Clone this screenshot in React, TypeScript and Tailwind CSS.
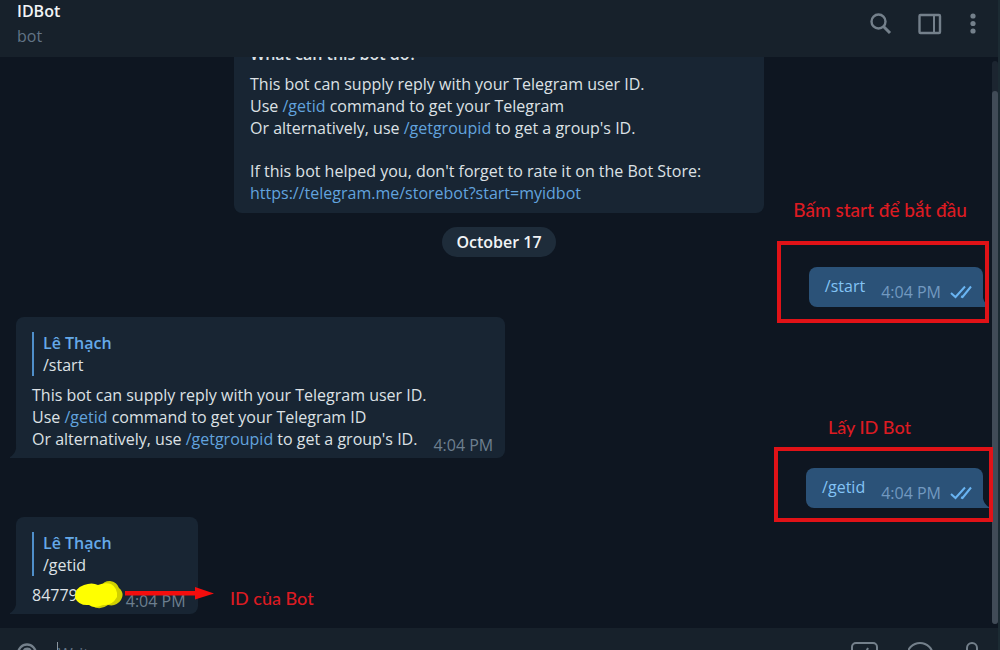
import type { ReactNode } from "react";

function Ticks() {
  return (
    <svg viewBox="0 0 24 16" className="h-4 w-6 shrink-0 text-[#69b4f2]" fill="none" stroke="currentColor" strokeWidth="2" role="img" aria-label="Read">
      <path d="M2 9 L6.5 13 L16 2.5 M12 12.5 L13.5 13 L22 2.5" />
    </svg>
  );
}

function Command({ children }: { children: ReactNode }) {
  return <a href="#command" className="text-[#62a3de]">{children}</a>;
}

function Incoming({ command, children }: { command: string; children: ReactNode }) {
  return (
    <article className="relative ml-4 shrink-0 self-start rounded-lg rounded-bl-none bg-[#182533] pt-[15px] pr-3 pb-2 pl-4">
      <svg viewBox="0 0 7 14" className="absolute bottom-0 -left-[6px] h-[14px] w-[7px]" aria-hidden="true">
        <path d="M7 0 C6 7 4 11 0 13 V14 H7 Z" fill="#182533" />
      </svg>
      <blockquote className="mb-2 border-l-2 border-[#4f8fca] pl-[9px]">
        <p className="font-semibold text-[#65a9e8]">Lê Thạch</p>
        <p>{command}</p>
      </blockquote>
      {children}
    </article>
  );
}

function Outgoing({ command, children }: { command: string; children: ReactNode }) {
  return (
    <article className="relative mr-[15px] flex h-10 shrink-0 items-start self-end rounded-lg rounded-br-none bg-[#2b5278] pr-2.5 pl-4">
      <svg viewBox="0 0 7 14" className="absolute -right-[6px] bottom-0 h-[14px] w-[7px]" aria-hidden="true">
        <path d="M0 0 C1 7 3 11 7 13 V14 H0 Z" fill="#2b5278" />
      </svg>
      <a href="#command" className="pt-2 text-[#83c4f5]">{command}</a>
      <time className="pt-[14px] pl-4 text-[#7299c0]">4:04 PM</time>
      <span className="pt-[17px] pl-2"><Ticks /></span>
      {children}
    </article>
  );
}

const note = "absolute font-['Lato',sans-serif] leading-6 font-medium whitespace-nowrap text-[#dc1b22]";

export default function App() {
  return (
    <div className="flex h-screen flex-col overflow-hidden border-r-2 border-[#1c2b33] bg-[#0e1621] font-['Open_Sans','Noto_Sans',sans-serif] text-base leading-[22px] text-[#dde1e5]">
      <header className="flex h-[57px] shrink-0 items-start justify-between bg-[#17212b] pr-[19px] pl-[17px]">
        <div>
          <h1 className="font-semibold text-[#f1f4f6]">IDBot</h1>
          <p className="pt-[3px] text-[#627486]">bot</p>
        </div>
        <nav className="flex gap-[25px] pt-3 text-[#74808b]">
          <button aria-label="Search" className="h-6 w-6">
            <svg viewBox="0 0 24 24" className="h-6 w-6" fill="none" stroke="currentColor" strokeWidth="2.4">
              <circle cx="9.5" cy="9.5" r="7" />
              <path d="M14.5 14.5 L21 21" strokeWidth="3" />
            </svg>
          </button>
          <button aria-label="Toggle side panel" className="h-6 w-6">
            <svg viewBox="0 0 24 24" className="h-6 w-6" fill="none" stroke="currentColor" strokeWidth="2">
              <rect x="1.5" y="3" width="20.5" height="18" rx="1" strokeWidth="2.4" />
              <path d="M16 3 V21" />
            </svg>
          </button>
          <button aria-label="More" className="h-6 w-3">
            <svg viewBox="0 0 12 24" className="h-6 w-3" fill="currentColor">
              <circle cx="6" cy="4" r="2.6" /><circle cx="6" cy="11.5" r="2.6" /><circle cx="6" cy="19" r="2.6" />
            </svg>
          </button>
        </nav>
      </header>

      <div className="flex min-h-0 flex-1">
        <main className="flex min-w-0 flex-1 flex-col justify-end overflow-hidden pb-[14px]">
          <section className="mb-[14px] w-[530px] shrink-0 self-center rounded-lg bg-[#182533] px-4 pt-3 pb-[9px]">
            <h2 className="mb-2 font-semibold">What can this bot do?</h2>
            <p>This bot can supply reply with your Telegram user ID.</p>
            <p>Use <Command>/getid</Command> command to get your Telegram</p>
            <p>Or alternatively, use <Command>/getgroupid</Command> to get a group's ID.</p>
            <p className="pt-[21px]">If this bot helped you, don't forget to rate it on the Bot Store:</p>
            <a href="https://telegram.me/storebot?start=myidbot" className="text-[#62a3de]">https://telegram.me/storebot?start=myidbot</a>
          </section>

          <div className="mb-[10px] shrink-0 self-center rounded-full bg-[#1e2c3a] px-[14px] py-1 font-semibold text-[#f1f4f6]">October 17</div>

          <Outgoing command="/start">
            <span className={note + " -top-[69px] right-4 text-[19px]"}>Bấm start để bắt đầu</span>
            <span className="absolute -top-[26px] -right-[6px] -bottom-4 -left-[32px] border-4 border-[#e01217]" />
          </Outgoing>

          <div className="my-[10px] flex shrink-0 flex-col">
            <Incoming command="/start">
              <p>This bot can supply reply with your Telegram user ID.</p>
              <p>Use <Command>/getid</Command> command to get your Telegram ID</p>
              <div className="flex">
                <p>Or alternatively, use <Command>/getgroupid</Command> to get a group's ID.</p>
                <time className="relative top-[6px] pl-4 text-[#6d7f8f]">4:04 PM</time>
              </div>
            </Incoming>
          </div>

          <Outgoing command="/getid">
            <span className={note + " -top-[53px] right-[72px] text-lg"}>Lấy ID Bot</span>
            <span className="absolute -top-[21px] -right-[10px] -bottom-[14px] -left-[32px] border-4 border-[#e01217]" />
          </Outgoing>

          <div className="mt-[9px] flex shrink-0 flex-col">
            <Incoming command="/getid">
              <div className="flex justify-between gap-12">
                <p>84779</p>
                <time className="relative top-[6px] text-[#6d7f8f]">4:04 PM</time>
              </div>
              <svg viewBox="0 0 140 30" className="absolute bottom-[4px] left-[58px] h-[30px] w-[140px]" aria-hidden="true">
                <path d="M28 6 Q29 1 36 1 Q43 2 45 8 Q51 13 47 20 Q42 27 34 25 Q26 31 18 26Z" fill="#d0d000" />
                <path d="M10 5 Q18 2 24 5 Q31 2 37 4 Q44 8 43 17 Q38 26 29 25 Q20 29 15 25 Q5 26 1 18 Q0 8 10 5Z" fill="#ffff00" />
                <path d="M51 11 H121 V7 L140 13.5 L121 19.5 V15.5 H51Z" fill="#f40d0d" />
              </svg>
              <span className={note + " bottom-[4px] left-[214px] text-lg"}>ID của Bot</span>
            </Incoming>
          </div>
        </main>
        <div className="-ml-1.5 flex w-1.5 shrink-0 flex-col pt-1 pb-1" aria-hidden="true">
          <div className="flex flex-1 flex-col rounded-full bg-[#1c2530] pt-[30px]">
            <div className="flex-1 rounded-full bg-[#414b57]" />
          </div>
        </div>
      </div>

      <footer className="flex h-[22px] shrink-0 items-start overflow-hidden bg-[#17212b] pt-3.5 pr-5 pl-4 text-[#74808b]">
        <button aria-label="Attach" className="h-6 w-6">
          <svg viewBox="0 0 24 24" className="h-6 w-6" fill="none" stroke="currentColor" strokeWidth="2.4">
            <path d="M2 12 A9 9.5 0 0 1 20 12 M7.5 12 V10 A3.8 3.8 0 0 1 15 10" />
          </svg>
        </button>
        <input aria-label="Message" placeholder="Write a message..." className="ml-[17px] h-6 min-w-0 flex-1 border-l border-[#8b959e] bg-transparent placeholder:text-[#627486]" />
        <div className="flex gap-[30px]">
          <button aria-label="Commands" className="h-7 w-7">
            <svg viewBox="0 0 28 28" className="h-7 w-7" fill="none" stroke="currentColor" strokeWidth="2">
              <rect x="2" y="1" width="25" height="24" rx="4" /><path d="M18 6 L12 18" />
            </svg>
          </button>
          <button aria-label="Emoji" className="h-7 w-7">
            <svg viewBox="0 0 28 28" className="h-7 w-7" fill="none" stroke="currentColor" strokeWidth="2"><circle cx="12" cy="14" r="13" /></svg>
          </button>
          <button aria-label="Voice" className="h-7 w-3">
            <svg viewBox="0 0 12 28" className="h-7 w-3" fill="none" stroke="currentColor" strokeWidth="2"><rect x="1" y="1" width="10" height="18" rx="5" /></svg>
          </button>
        </div>
      </footer>
    </div>
  );
}
